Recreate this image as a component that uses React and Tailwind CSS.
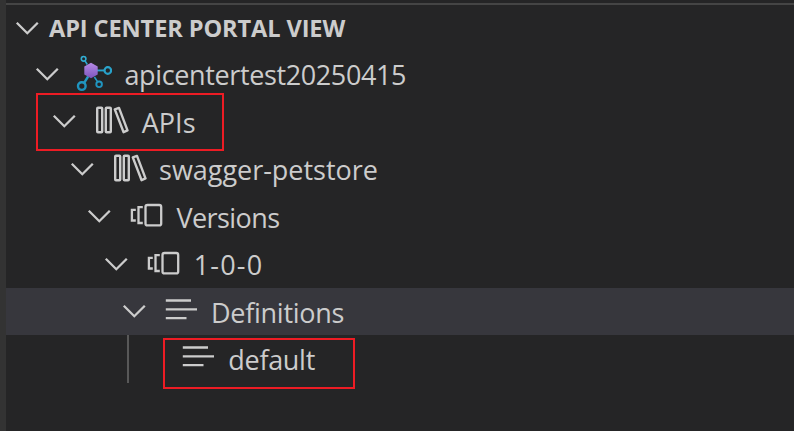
import React from 'react';

const stroke = { fill: 'none', stroke: '#cccccc', strokeWidth: 2.3 };

function Chevron() {
  return (
    <svg width="34" height="47" viewBox="0 0 34 47" className="shrink-0" {...stroke}>
      <path d="M6.8 17.8 L17.3 28.2 L27.8 17.8" />
    </svg>
  );
}

function ApiCenterIcon() {
  return (
    <svg width="36" height="47" viewBox="0 0 36 47" className="shrink-0">
      <defs>
        <linearGradient id="hex" x1="0" y1="0" x2="0" y2="1">
          <stop offset="0" stopColor="#b68be6" />
          <stop offset="1" stopColor="#7d55bd" />
        </linearGradient>
        <linearGradient id="nodes" gradientUnits="userSpaceOnUse" x1="0" y1="5" x2="0" y2="40">
          <stop offset="0" stopColor="#32b0d5" />
          <stop offset="1" stopColor="#1b8fbb" />
        </linearGradient>
      </defs>
      <g transform="translate(0.6 0)">
        <g fill="none" stroke="url(#nodes)">
          <path strokeWidth="1.6" d="M8.4 9.8 L10.7 13.5 M17.8 26 L20.9 30.6" />
          <path strokeWidth="1.9" d="M20 19.45 L27.8 19.45" />
          <path strokeWidth="2.4" d="M11.6 25.3 L7.4 32.2" />
          <circle cx="7" cy="7.8" r="2.3" strokeWidth="1.6" />
          <circle cx="31.2" cy="19.5" r="3.3" strokeWidth="2.2" />
          <circle cx="22.5" cy="33.3" r="2.8" strokeWidth="1.9" />
          <circle cx="5.2" cy="35.1" r="3.8" strokeWidth="2.4" />
        </g>
        <path fill="url(#hex)" d="M14.4 11.7 L21.1 15.5 V23.4 L14.4 27.2 L7.7 23.4 V15.5 Z" />
      </g>
    </svg>
  );
}

function LibraryIcon() {
  return (
    <svg width="36" height="47" viewBox="0 0 36 47" className="shrink-0" {...stroke} strokeWidth="2.4">
      <rect x="4.2" y="9.8" width="5" height="24.4" rx="0.8" />
      <rect x="12.8" y="9.8" width="5" height="24.4" rx="0.8" />
      <path strokeLinejoin="round" d="M21.8 11.4 L26 9.9 L34.5 32.4 L30.6 34.2 Z" />
    </svg>
  );
}

function VersionsIcon() {
  return (
    <svg width="36" height="47" viewBox="0 0 36 47" className="shrink-0" {...stroke}>
      <path d="M7.8 16.8 H3.9 V27.5 H7.8 M14.8 14.2 H10.5 V30 H14.8" />
      <rect x="17.5" y="12" width="15.7" height="20.4" rx="2" />
    </svg>
  );
}

function ListIcon() {
  return (
    <svg width="36" height="47" viewBox="0 0 36 47" className="shrink-0" {...stroke}>
      <path d="M2.8 12.5 H28 M2.8 21.4 H34 M2.8 30.2 H23.5" />
    </svg>
  );
}

const rows = [
  { label: 'apicentertest20250415', Icon: ApiCenterIcon, pad: 'pl-[24px]', type: 'leading-[48px] tracking-[-0.38px]' },
  { label: 'APIs', Icon: LibraryIcon, pad: 'pl-[41.3px]', type: 'leading-[49px]' },
  { label: 'swagger-petstore', Icon: LibraryIcon, pad: 'pl-[58.6px]', type: 'leading-[48px] tracking-[-0.03px]' },
  { label: 'Versions', Icon: VersionsIcon, pad: 'pl-[75.9px]', type: 'leading-[49px] tracking-[-0.55px]' },
  { label: '1-0-0', Icon: VersionsIcon, pad: 'pl-[93.2px]', type: 'leading-[48px] tracking-[1.2px]' },
  { label: 'Definitions', Icon: ListIcon, pad: 'pl-[110.5px]', type: 'leading-[49px] tracking-[-0.27px]', selected: true },
  { label: 'default', Icon: ListIcon, pad: 'pl-[127.8px]', type: 'leading-[49px] tracking-[-0.3px]', leaf: true },
];

export default function App() {
  return (
    <div className="relative flex h-[431px] w-[794px] overflow-hidden bg-[#252526] font-['Open_Sans','Noto_Sans',sans-serif] text-[#cccccc]">
      <div className="w-[6px] shrink-0 bg-[#333333]" />
      <div className="min-w-0 flex-1 pt-[3px]">
        <div className="h-[2px] bg-[#454545]" />
        <div className="flex h-[46px] items-center pl-[4px]">
          <Chevron />
          <h2 className="ml-[5px] text-[23.6px] leading-[46px] font-bold whitespace-nowrap tracking-[-0.12px]">API CENTER PORTAL VIEW</h2>
        </div>
        <ul>
          {rows.map(({ label, Icon, pad, type, selected, leaf }) => (
            <li key={label} className={`flex h-[47.4px] items-start ${pad} ${selected ? 'bg-[#37373d]' : ''}`}>
              {leaf ? <span className="w-[34px] shrink-0" /> : <Chevron />}
              <span className="ml-[12px] flex"><Icon /></span>
              <span className={`ml-[12.5px] text-[27px] whitespace-nowrap ${type}`}>{label}</span>
            </li>
          ))}
        </ul>
      </div>
      <div className="absolute top-[335px] left-[127px] h-[48px] w-[2px] bg-[#585858]" />
      <div className="absolute top-[93px] left-[36px] h-[58px] w-[188px] border-2 border-[#ed1c24]" />
      <div className="absolute top-[338px] left-[163px] h-[51px] w-[192px] border-2 border-[#ed1c24]" />
    </div>
  );
}
